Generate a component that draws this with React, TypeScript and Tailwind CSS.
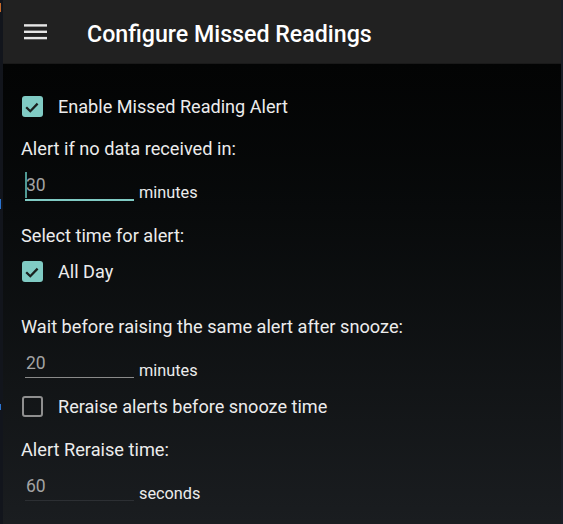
const font = { fontFamily: 'Roboto, "Noto Sans", sans-serif' };

function CheckBox({ checked }: { checked: boolean }) {
  if (!checked) {
    return <div className="h-[21px] w-[21px] shrink-0 rounded-[3px] border-2 border-[#8f8f8f]" />;
  }
  return (
    <div className="flex h-[21px] w-[21px] shrink-0 items-center justify-center rounded-[3px] bg-[#80cbc4]">
      <svg width="21" height="21" viewBox="0 0 21 21">
        <path d="M4.2 11.2 L8.3 15.2 L15.6 7.6" fill="none" stroke="#1a201f" strokeWidth="2.3" />
      </svg>
    </div>
  );
}

function CheckRow({ checked, label, className }: { checked: boolean; label: string; className: string }) {
  return (
    <div className={`ml-[1px] flex h-[21px] items-center ${className}`}>
      <CheckBox checked={checked} />
      <span className="ml-[15px] text-[18.1px] leading-[21px] text-[#ececec]">{label}</span>
    </div>
  );
}

function NumberField({
  value,
  unit,
  line,
  focused,
  className,
}: {
  value: string;
  unit: string;
  line: string;
  focused?: boolean;
  className: string;
}) {
  return (
    <div className={`ml-[4px] flex items-start ${className}`}>
      <div className={`relative w-[109px] pb-[3px] ${line}`}>
        {focused && <div className="absolute left-0 top-[-3px] h-[26px] w-[2px] bg-[#4f9a94]" />}
        <div className="pl-[1px] text-[17.5px] leading-[21px] text-[#a3a3a3]">{value}</div>
      </div>
      <span className="ml-[5px] mt-[8px] text-[16.3px] leading-[20px] text-[#ececec]">{unit}</span>
    </div>
  );
}

export default function App() {
  return (
    <div className="flex h-[524px] w-[563px] overflow-hidden bg-[#12151c]" style={font}>
      <div className="flex w-[3px] shrink-0 flex-col">
        <div className="mt-[3px] h-[9px] w-[1px] bg-[#c56a2a]" />
        <div className="mt-[187px] h-[10px] w-[1px] bg-[#2a74d0]" />
        <div className="mt-[195px] h-[6px] w-[1px] bg-[#2a74d0]" />
      </div>

      <div className="flex w-[558px] shrink-0 flex-col">
        <header className="flex h-[63px] items-center bg-[#212121] pl-[21px]">
          <svg width="23" height="16" viewBox="0 0 23 16" className="shrink-0">
            <rect x="0" y="0.2" width="23" height="2.4" fill="#e6e6e6" />
            <rect x="0" y="6.6" width="23" height="2.4" fill="#e6e6e6" />
            <rect x="0" y="12.9" width="23" height="2.4" fill="#e6e6e6" />
          </svg>
          <h1 className="ml-[40px] mt-[5px] text-[23.2px] font-medium leading-[28px] text-white">
            Configure Missed Readings
          </h1>
        </header>
        <div className="h-[1px] bg-[#1a1a1a]" />

        <main className="flex flex-1 flex-col bg-gradient-to-b from-[#030404] to-[#1a1d20] pl-[18px]">
          <CheckRow checked label="Enable Missed Reading Alert" className="mt-[32px]" />

          <p className="mt-[20px] text-[18.2px] leading-[24px] text-[#ececec]">Alert if no data received in:</p>
          <NumberField
            value="30"
            unit="minutes"
            focused
            line="border-b-2 border-[#80cbc4]"
            className="mt-[14px]"
          />

          <p className="mt-[21px] text-[18.2px] leading-[24px] text-[#ececec]">Select time for alert:</p>
          <CheckRow checked label="All Day" className="mt-[13px]" />

          <p className="mt-[33px] text-[18.2px] leading-[24px] text-[#ececec]">
            Wait before raising the same alert after snooze:
          </p>
          <NumberField value="20" unit="minutes" line="border-b border-[#8a8a8a]" className="mt-[14px]" />

          <CheckRow checked={false} label="Reraise alerts before snooze time" className="mt-[15px]" />

          <p className="mt-[21px] text-[18.2px] leading-[24px] text-[#ececec]">Alert Reraise time:</p>
          <NumberField value="60" unit="seconds" line="border-b border-[#2c2f33]" className="mt-[14px]" />
        </main>
      </div>

      <div className="w-[2px] shrink-0 bg-[#1a1e27]" />
    </div>
  );
}
